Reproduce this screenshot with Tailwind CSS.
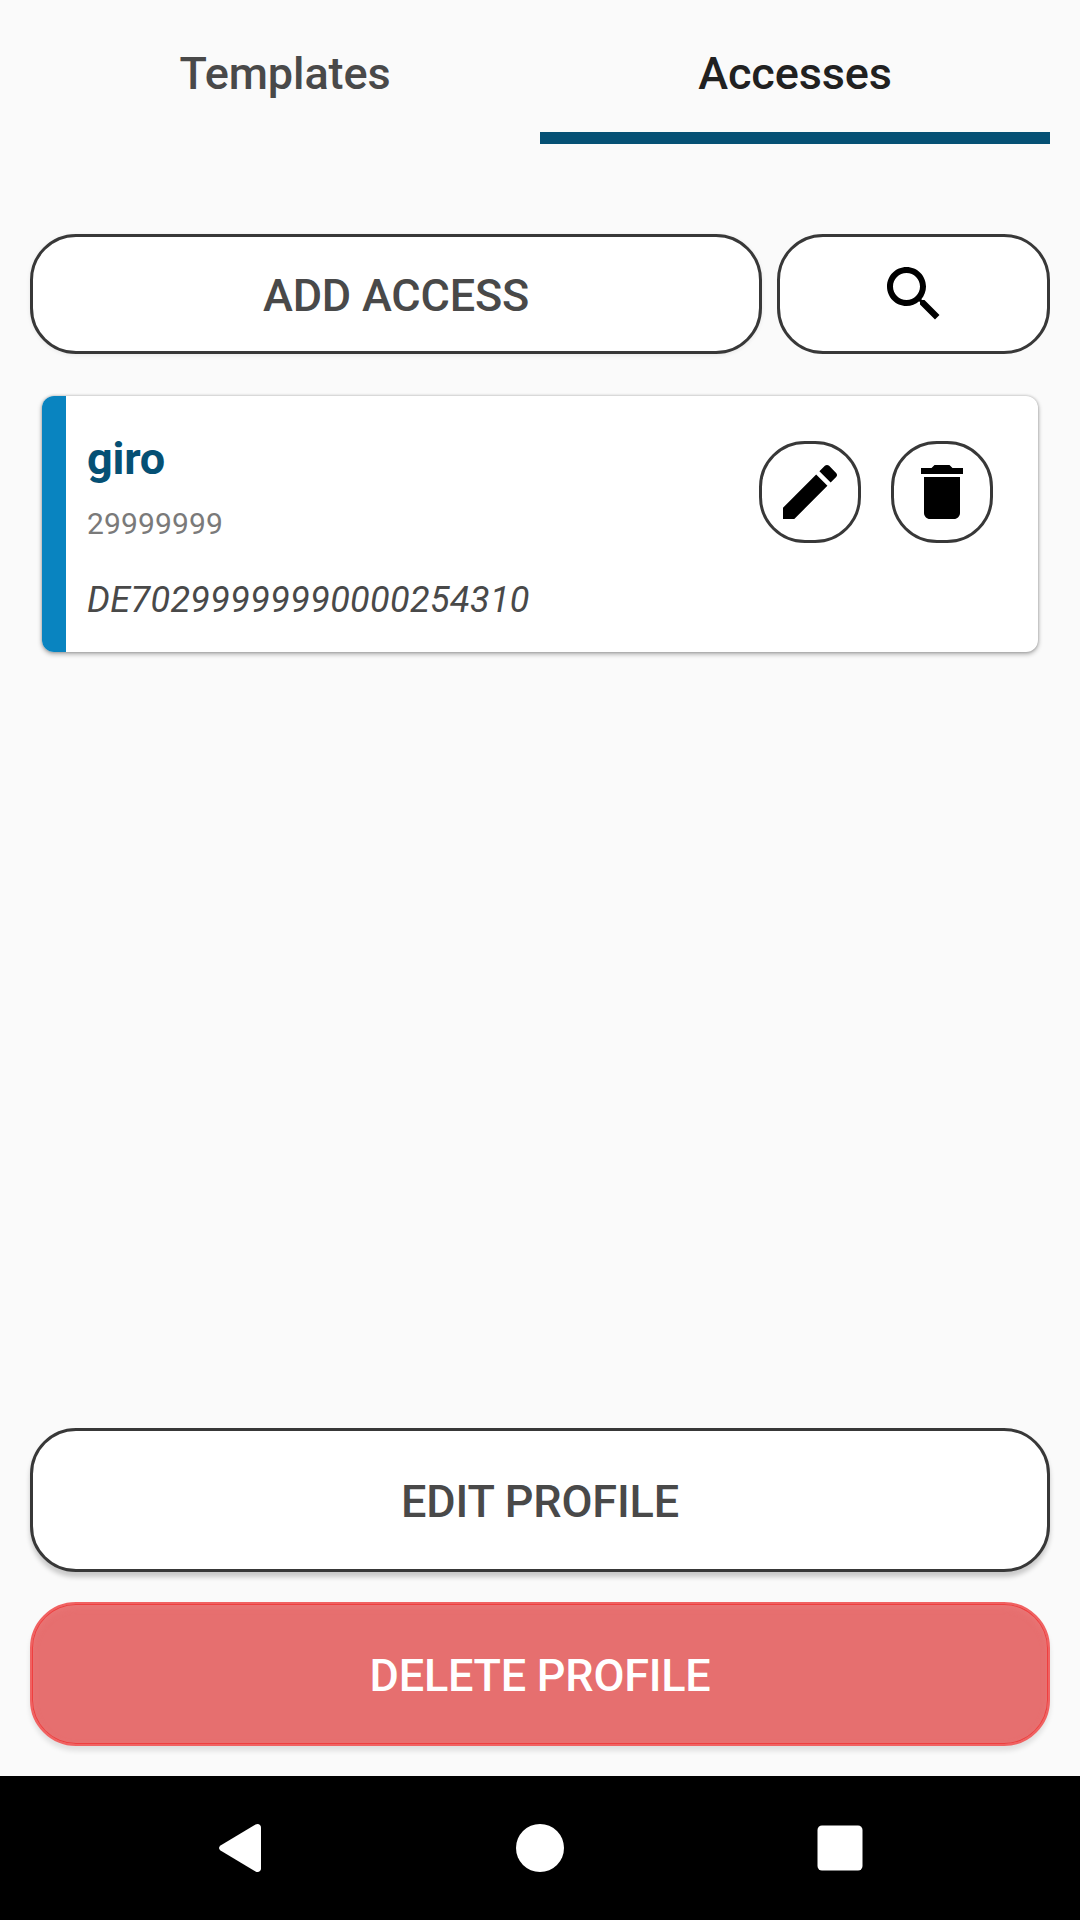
<!DOCTYPE html>
<html lang="en">
<head>
<meta charset="utf-8">
<title>Profile accesses</title>
<script src="https://cdn.jsdelivr.net/npm/@tailwindcss/browser@4"></script>
</head>
<body class="bg-[#fafafa] font-['Roboto',sans-serif]">
<div class="flex h-[1920px] w-[1080px] flex-col overflow-hidden">
  <nav class="grid h-36 grid-cols-2 px-[30px] text-center text-[45px] leading-[53px] font-medium tracking-[-0.1px]">
    <a class="pt-[47px] text-[#494949]">Templates</a>
    <a class="border-b-12 border-[#055074] pt-[47px] text-[#212121]">Accesses</a>
  </nav>

  <main class="flex flex-1 flex-col px-[30px] pt-[90px] pb-[30px]">
    <div class="flex gap-[15px]">
      <button class="h-[120px] w-[732px] rounded-[46px] border-3 border-[#383838] bg-white pt-[3px] text-[45px] leading-[53px] font-medium tracking-[-0.2px] text-[#494949] shadow-[0_1px_4px_rgba(0,0,0,0.08)]">ADD ACCESS</button>
      <button class="flex h-[120px] flex-1 items-center justify-center rounded-[46px] border-3 border-[#383838] bg-white" aria-label="Search">
        <svg class="size-[72px]" viewBox="0 0 24 24"><path d="M15.5 14h-.79l-.28-.27C15.41 12.59 16 11.11 16 9.5 16 5.91 13.09 3 9.5 3S3 5.91 3 9.5 5.91 16 9.5 16c1.61 0 3.09-.59 4.23-1.57l.27.28v.79l5 4.99L20.49 19l-4.99-5zm-6 0C7.01 14 5 11.99 5 9.5S7.01 5 9.5 5 14 7.01 14 9.5 11.99 14 9.5 14z"/></svg>
      </button>
    </div>

    <article class="mx-3 mt-[42px] flex h-64 overflow-hidden rounded-xl bg-white shadow-[0_2px_5px_rgba(0,0,0,0.32),0_0_3px_rgba(0,0,0,0.24)]">
      <div class="w-6 bg-[#0984c0]"></div>
      <div class="flex-1 pl-[21px]">
        <h2 class="mt-9 text-[45px] leading-[53px] font-bold tracking-[-0.2px] text-[#055074]">giro</h2>
        <p class="mt-[21px] text-[30px] leading-[36px] tracking-[0.15px] text-[#7a7a7a]">29999999</p>
        <p class="mt-[37px] text-[36px] leading-[42px] tracking-[0.35px] text-[#494949] italic">DE70299999990000254310</p>
      </div>
      <div class="flex gap-[30px] pt-[45px] pr-[45px]">
        <button class="flex size-[102px] items-center justify-center rounded-[46px] border-3 border-[#383838]" aria-label="Edit">
          <svg class="size-[72px] shrink-0" viewBox="0 0 24 24"><path d="M3 17.25V21h3.75L17.81 9.94l-3.75-3.75L3 17.25zM20.71 7.04c.39-.39.39-1.02 0-1.41l-2.34-2.34c-.39-.39-1.02-.39-1.41 0l-1.83 1.83 3.75 3.75 1.83-1.83z"/></svg>
        </button>
        <button class="flex size-[102px] items-center justify-center rounded-[46px] border-3 border-[#383838]" aria-label="Delete">
          <svg class="size-[72px] shrink-0" viewBox="0 0 24 24"><path d="M6 19c0 1.1.9 2 2 2h8c1.1 0 2-.9 2-2V7H6v12zM19 4h-3.5l-1-1h-5l-1 1H5v2h14V4z"/></svg>
        </button>
      </div>
    </article>

    <div class="mt-auto flex flex-col gap-[30px]">
      <button class="h-36 rounded-[46px] border-3 border-[#383838] bg-white pt-[3px] text-[45px] leading-[53px] font-medium tracking-[-0.15px] text-[#494949] shadow-[0_5px_5px_rgba(0,0,0,0.2)]">EDIT PROFILE</button>
      <button class="h-36 rounded-[46px] border-2 border-[#f06262] bg-[#e66f6f] pt-[3px] text-[45px] leading-[53px] font-medium tracking-[-0.25px] text-white shadow-[0_5px_5px_rgba(0,0,0,0.1),inset_0_0_0_1px_#ee3f3f,inset_0_3px_6px_#ea7777]">DELETE PROFILE</button>
    </div>
  </main>

  <footer class="flex h-36 justify-center bg-black">
    <svg class="h-36 w-[660px]" viewBox="210 1776 660 144" fill="#fff">
      <path d="M255.500 1824.500C258 1823 261 1824.500 261 1827.500V1868.500C261 1871.500 258 1873 255.500 1871.500L220.500 1850.500C218.500 1849 218.500 1847 220.500 1845.500Z"/>
      <circle cx="540" cy="1848" r="24"/>
      <rect x="817.500" y="1825.500" width="45" height="45" rx="4.500"/>
    </svg>
  </footer>
</div>
</body>
</html>
